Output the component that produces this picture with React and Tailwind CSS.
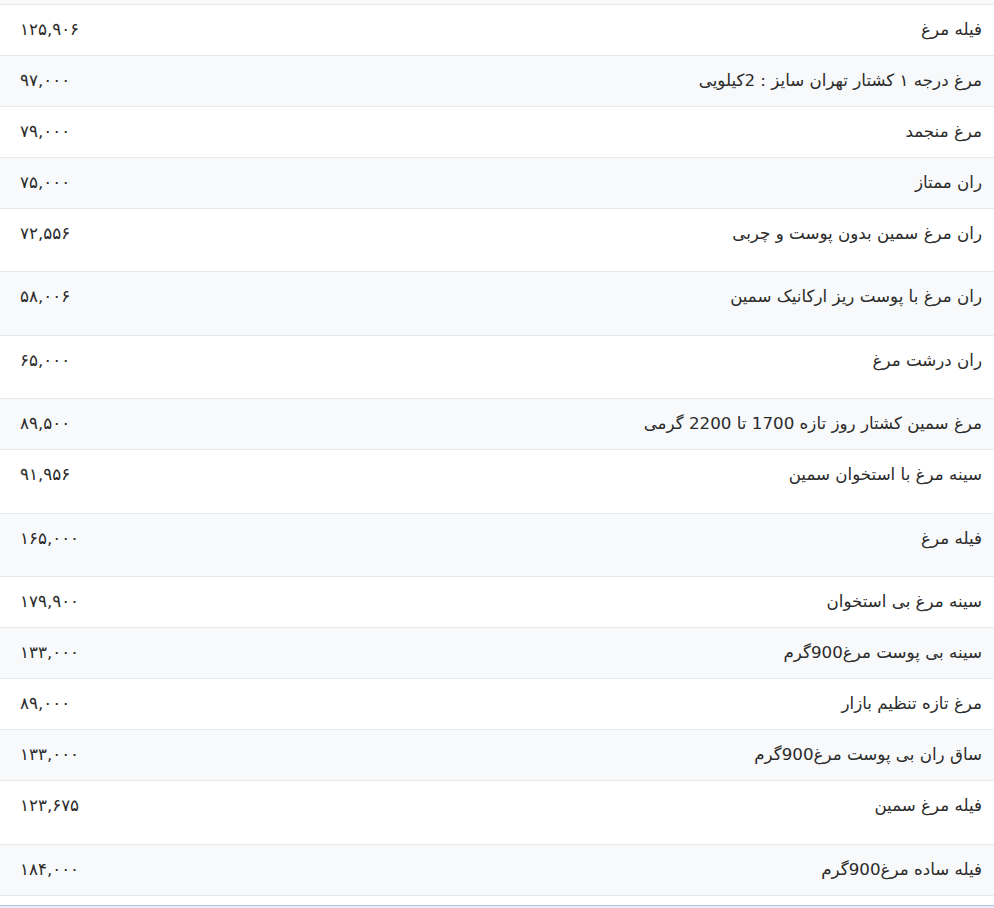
import React from "react";

const rows = [
  ["فیله مرغ", "۱۲۵,۹۰۶", "h-[51px]"],
  ["مرغ درجه ۱ کشتار تهران سایز : 2کیلویی", "۹۷,۰۰۰", "h-[51px]"],
  ["مرغ منجمد", "۷۹,۰۰۰", "h-[51px]"],
  ["ران ممتاز", "۷۵,۰۰۰", "h-[51px]"],
  ["ران مرغ سمین بدون پوست و چربی", "۷۲,۵۵۶", "h-[63px]"],
  ["ران مرغ با پوست ریز ارکانیک سمین", "۵۸,۰۰۶", "h-[64px]"],
  ["ران درشت مرغ", "۶۵,۰۰۰", "h-[63px]"],
  ["مرغ سمین کشتار روز تازه 1700 تا 2200 گرمی", "۸۹,۵۰۰", "h-[51px]"],
  ["سینه مرغ با استخوان سمین", "۹۱,۹۵۶", "h-[64px]"],
  ["فیله مرغ", "۱۶۵,۰۰۰", "h-[63px]"],
  ["سینه مرغ بی استخوان", "۱۷۹,۹۰۰", "h-[51px]"],
  ["سینه بی پوست مرغ900گرم", "۱۳۳,۰۰۰", "h-[51px]"],
  ["مرغ تازه تنظیم بازار", "۸۹,۰۰۰", "h-[51px]"],
  ["ساق ران بی پوست مرغ900گرم", "۱۳۳,۰۰۰", "h-[51px]"],
  ["فیله مرغ سمین", "۱۲۳,۶۷۵", "h-[64px]"],
  ["فیله ساده مرغ900گرم", "۱۸۴,۰۰۰", "h-[51px]"],
];

export default function App() {
  return (
    <div
      dir="rtl"
      className="w-[994px] h-[908px] overflow-hidden bg-white text-[#2b2b2b] text-[16.7px]"
      style={{ fontFamily: '"DejaVu Sans", "Noto Sans", sans-serif' }}
    >
      <div className="h-[5px] bg-[#f8f9fa] border-b border-[#e6e8eb]" />
      {rows.map(([name, price, h], i) => (
        <div
          key={i}
          className={`${h} flex justify-between border-b border-[#e6e8eb] ${
            i % 2 === 0 ? "bg-white" : "bg-[#f8f9fa]"
          }`}
        >
          <div className="pr-[12px] pt-[12px] leading-[24px] whitespace-nowrap">{name}</div>
          <div className="pl-[20px] pt-[12px] leading-[24px] whitespace-nowrap" dir="ltr">
            {price}
          </div>
        </div>
      ))}
      <div className="h-[9px] bg-white" />
      <div className="h-[10px] border-t border-[#b4c3de] bg-[#e6edf8]" />
    </div>
  );
}
